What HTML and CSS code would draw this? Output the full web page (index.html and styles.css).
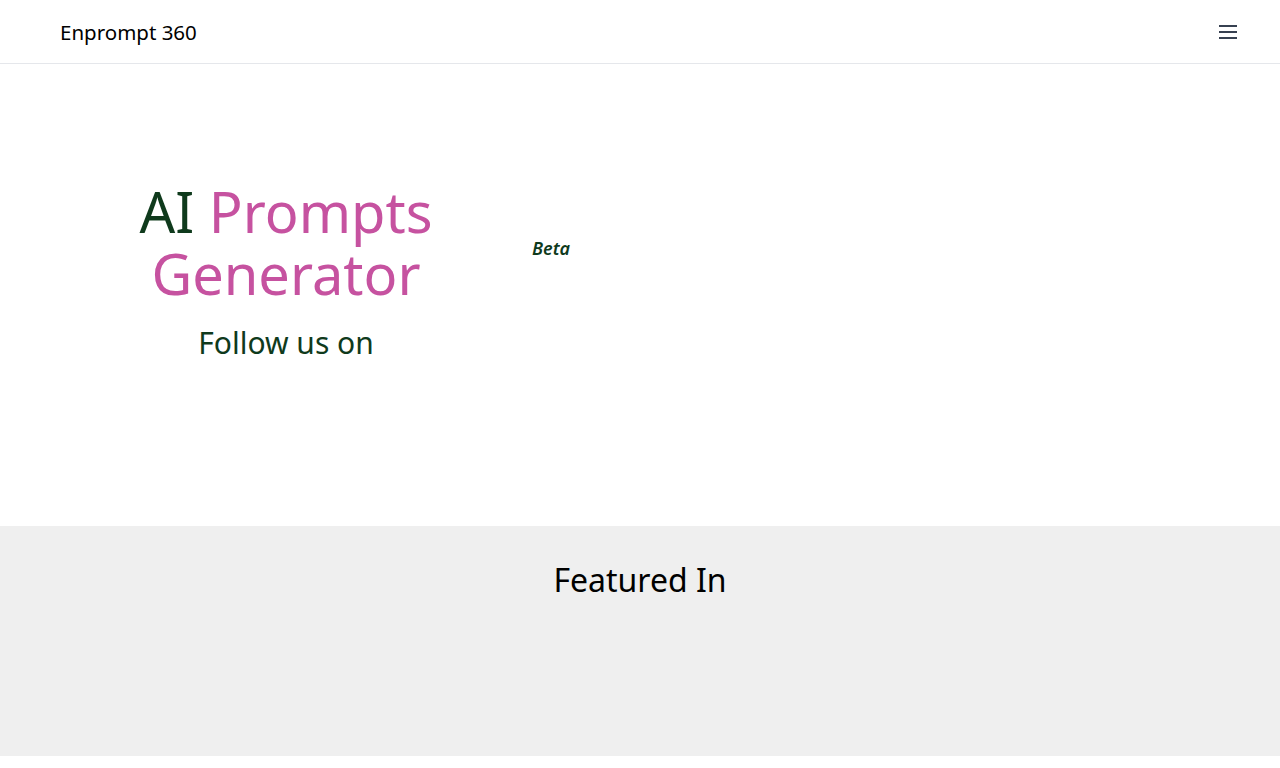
FILE: index.html
```html
<!DOCTYPE html>
<html lang="en">
<head>
    <meta charset="UTF-8">
    <meta name="viewport" content="width=device-width, initial-scale=1.0">
    <title>Enprompt 360 - AI Prompts Generator</title>
    <link rel="stylesheet" href="styles.css">
</head>
<body>
    <header class="navbar">
        <a class="brand" href="#">Enprompt 360</a>
        <button class="menu-toggle" aria-label="Menu">
            <svg width="20" height="20" viewBox="0 0 20 20" fill="none" stroke="#374151" stroke-width="2">
                <path d="M1 4h18M1 10h18M1 16h18"/>
            </svg>
        </button>
    </header>

    <section class="hero">
        <div class="hero-left">
            <h1 class="hero-title"><span class="dark">AI</span> <span>Prompts</span> <span>Generator</span></h1>
            <h2 class="follow">Follow us on</h2>
        </div>
        <div class="hero-right">
            <p class="beta">Beta</p>
        </div>
    </section>

    <section class="featured">
        <h2>Featured In</h2>
    </section>
</body>
</html>
```

FILE: styles.css
```css
body {
    margin: 0;
    font-family: "Noto Sans", Arial, sans-serif;
    background: white;
    color: #000;
}
.navbar {
    height: 63px;
    border-bottom: 1px solid #e5e7eb;
    display: flex;
    align-items: center;
    justify-content: space-between;
    padding: 0 42px 0 60px;
}
.brand {
    color: #000;
    text-decoration: none;
    font-size: 20.5px;
}
.menu-toggle {
    background: none;
    border: none;
    padding: 0;
    display: flex;
    cursor: pointer;
}
.hero {
    height: 462px;
    display: flex;
    padding: 0 60px;
}
.hero-left {
    width: 452px;
    text-align: center;
    padding-top: 116px;
}
.hero-title {
    margin: 0;
    font-size: 56px;
    font-weight: normal;
    line-height: 62px;
    color: #c652a0;
    padding: 0 60px;
}
.hero-title span {
    display: inline-block;
}
.hero-title .dark {
    color: #0f3a1c;
}
.follow {
    margin: 18px 0 0;
    font-size: 30px;
    font-weight: normal;
    color: #0f3a1c;
}
.hero-right {
    padding-left: 20px;
    padding-top: 172px;
}
.beta {
    margin: 0;
    font-size: 18px;
    font-style: italic;
    font-weight: 600;
    color: #0f3a1c;
}
.featured {
    background-color: #efefef;
    height: 230px;
    text-align: center;
    padding-top: 32px;
    box-sizing: border-box;
}
.featured h2 {
    margin: 0;
    font-size: 32px;
    font-weight: normal;
}
```
